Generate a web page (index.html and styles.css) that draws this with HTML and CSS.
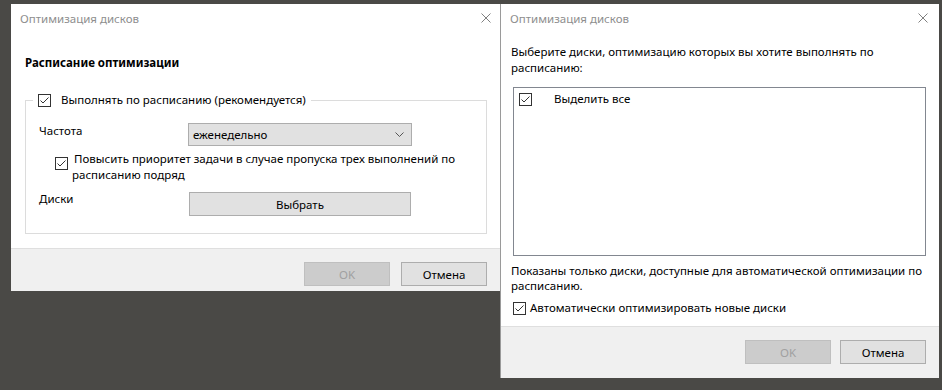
FILE: index.html
```html
<!DOCTYPE html>
<html lang="ru">
<head>
    <meta charset="UTF-8">
    <meta name="viewport" content="width=device-width, initial-scale=1.0">
    <title>Оптимизация дисков</title>
    <link rel="stylesheet" href="styles.css">
</head>
<body>
    <div class="desktop">
        <!-- schedule dialog (behind) -->
        <div class="window win-schedule">
            <div class="titlebar">
                <span class="title">Оптимизация дисков</span>
                <svg class="close" width="10" height="10" viewBox="0 0 10 10"><path d="M0.5 0.5 L9.5 9.5 M9.5 0.5 L0.5 9.5" stroke="#808080" stroke-width="1" fill="none"/></svg>
            </div>
            <div class="content">
                <h2>Расписание оптимизации</h2>
                <fieldset class="group">
                    <legend>
                        <span class="check checked"><svg width="13" height="13" viewBox="0 0 13 13"><polyline points="2.5,6.5 5,9 10.5,3.5" stroke="#333" fill="none"/></svg></span>
                        <span>Выполнять по расписанию (рекомендуется)</span>
                    </legend>
                    <div class="row">
                        <span class="label">Частота</span>
                        <div class="select">
                            <span>еженедельно</span>
                            <svg width="9" height="5" viewBox="0 0 9 5"><polyline points="0.5,0.5 4.5,4.5 8.5,0.5" stroke="#555" fill="none"/></svg>
                        </div>
                    </div>
                    <div class="row row-check">
                        <span class="check checked"><svg width="13" height="13" viewBox="0 0 13 13"><polyline points="2.5,6.5 5,9 10.5,3.5" stroke="#333" fill="none"/></svg></span>
                        <span class="check-text">Повысить приоритет задачи в случае пропуска трех выполнений по<br>расписанию подряд</span>
                    </div>
                    <div class="row">
                        <span class="label">Диски</span>
                        <button class="btn btn-wide">Выбрать</button>
                    </div>
                </fieldset>
            </div>
            <div class="footer">
                <button class="btn" disabled>OK</button>
                <button class="btn">Отмена</button>
            </div>
        </div>

        <!-- disk selection dialog (front) -->
        <div class="window win-disks">
            <div class="titlebar">
                <span class="title">Оптимизация дисков</span>
                <svg class="close" width="10" height="10" viewBox="0 0 10 10"><path d="M0.5 0.5 L9.5 9.5 M9.5 0.5 L0.5 9.5" stroke="#808080" stroke-width="1" fill="none"/></svg>
            </div>
            <div class="content">
                <p class="text">Выберите диски, оптимизацию которых вы хотите выполнять по<br>расписанию:</p>
                <div class="listbox">
                    <div class="list-item">
                        <span class="check checked"><svg width="13" height="13" viewBox="0 0 13 13"><polyline points="2.5,6.5 5,9 10.5,3.5" stroke="#333" fill="none"/></svg></span>
                        <span class="item-text">Выделить все</span>
                    </div>
                </div>
                <p class="text note">Показаны только диски, доступные для автоматической оптимизации по<br>расписанию.</p>
                <label class="auto">
                    <span class="check checked"><svg width="13" height="13" viewBox="0 0 13 13"><polyline points="2.5,6.5 5,9 10.5,3.5" stroke="#333" fill="none"/></svg></span>
                    <span>Автоматически оптимизировать новые диски</span>
                </label>
            </div>
            <div class="footer">
                <button class="btn" disabled>OK</button>
                <button class="btn">Отмена</button>
            </div>
        </div>
    </div>
</body>
</html>
```

FILE: styles.css
```css
* {
    margin: 0;
    padding: 0;
    box-sizing: border-box;
    font-family: 'Noto Sans', 'Open Sans', sans-serif;
}
body {
    background-color: #4a4946;
    width: 942px;
    height: 390px;
    overflow: hidden;
    font-size: 11.5px;
    color: #000;
}
.desktop {
    position: relative;
    width: 942px;
    height: 390px;
}
.window {
    position: absolute;
    background: #fff;
    display: flex;
    flex-direction: column;
}
.win-schedule {
    left: 11px;
    top: 4px;
    width: 491px;
    height: 287px;
}
.win-disks {
    left: 500px;
    top: 4px;
    width: 439px;
    height: 374px;
    border-left: 1px solid #9a9a9a;
}
.titlebar {
    height: 30px;
    display: flex;
    align-items: center;
    justify-content: space-between;
    padding-left: 9px;
    padding-right: 11px;
}
.title {
    color: #8e8e8e;
    line-height: 16px;
}
.close {
    margin-top: -3px;
}
.content {
    flex: 1;
    display: flex;
    flex-direction: column;
}
.win-schedule .content {
    padding: 0 15px 0 14px;
}
.win-schedule h2 {
    font-size: 11.5px;
    font-weight: bold;
    line-height: 16px;
    margin-top: 21px;
}
.group {
    margin-top: 21px;
    border: 1px solid #dcdcdc;
    padding: 0 0 16px 13px;
    height: 142px;
}
.group legend {
    margin-left: -6px;
    padding: 0 5px;
    display: flex;
    align-items: center;
    gap: 10px;
    line-height: 16px;
}
.check {
    width: 13px;
    height: 13px;
    border: 1px solid #333;
    display: inline-flex;
    align-items: center;
    justify-content: center;
    flex-shrink: 0;
    background: #fff;
}
.check svg {
    margin: -1px;
}
.row {
    display: flex;
    align-items: flex-start;
    line-height: 16px;
}
.row:first-of-type {
    margin-top: 15px;
}
.label {
    width: 149px;
}
.select {
    width: 224px;
    height: 23px;
    background: #e1e1e1;
    border: 1px solid #adadad;
    display: flex;
    align-items: center;
    justify-content: space-between;
    padding: 0 7px 0 4px;
}
.row-check {
    margin-top: 5px;
    padding-left: 16px;
}
.row-check .check {
    margin-top: 6px;
    margin-right: 4px;
}
.check-text {
    text-indent: 2px;
    white-space: nowrap;
}
.row-check + .row {
    margin-top: 8px;
}
.btn {
    width: 86px;
    height: 24px;
    background: #e1e1e1;
    border: 1px solid #adadad;
    font-size: 11.5px;
    color: #000;
}
.btn:disabled {
    background: #cccccc;
    border-color: #bfbfbf;
    color: #a0a0a0;
}
.btn-wide {
    width: 222px;
    margin-left: 1px;
    margin-top: 1px;
}
.footer {
    border-top: 1px solid #dfdfdf;
    background: #f0f0f0;
    display: flex;
    justify-content: flex-end;
    align-items: flex-start;
}
.win-schedule .footer {
    height: 43px;
    padding: 13px 15px 0 0;
    gap: 11px;
}
.win-disks .footer {
    height: 52px;
    padding: 13px 13px 0 0;
    gap: 9px;
}
.win-disks .content {
    padding: 0 13px 0 10px;
}
.text {
    line-height: 16px;
    white-space: nowrap;
}
.win-disks .text:first-child {
    margin-top: 10px;
}
.listbox {
    margin-top: 11px;
    margin-left: 2px;
    height: 169px;
    border: 1px solid #828790;
    padding: 3px 5px;
}
.list-item {
    display: flex;
    align-items: center;
    line-height: 16px;
}
.item-text {
    margin-left: 22px;
}
.note {
    margin-top: 7px;
    line-height: 15px;
}
.auto {
    margin-top: 7px;
    margin-left: 2px;
    display: flex;
    align-items: center;
    gap: 4px;
    line-height: 16px;
}
```
